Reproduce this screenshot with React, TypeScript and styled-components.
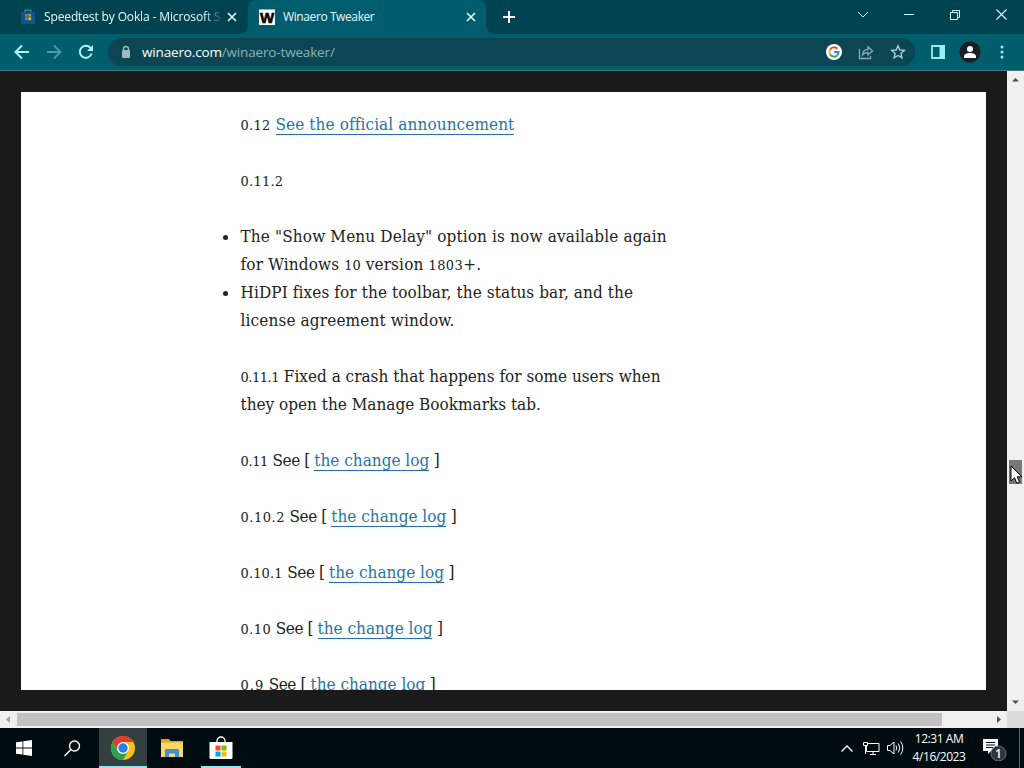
import React from "react";
import styled, { createGlobalStyle } from "styled-components";

const Global = createGlobalStyle`
  * { box-sizing: border-box; }
  body { margin: 0; overflow: hidden; background: #1a1a1a; }
`;

const UI = `"Open Sans", "Noto Sans", sans-serif`;

const Screen = styled.div`
  width: 1024px;
  height: 768px;
  display: flex;
  flex-direction: column;
  overflow: hidden;
  font-family: ${UI};
`;

const TabStrip = styled.header`
  height: 34px;
  flex: none;
  display: flex;
  background: #004350;
`;

const Tab = styled.div<{ $active?: boolean; $width: number; $pad: number }>`
  position: relative;
  width: ${(p) => p.$width}px;
  height: 34px;
  display: flex;
  align-items: center;
  padding: 0 ${(p) => (p.$active ? 10 : 11)}px 0 ${(p) => p.$pad}px;
  background: ${(p) => (p.$active ? "#005d6e" : "transparent")};
  border-radius: 8px 8px 0 0;
  color: #fff;

  &::before,
  &::after {
    content: "";
    display: ${(p) => (p.$active ? "block" : "none")};
    position: absolute;
    bottom: 0;
    width: 8px;
    height: 8px;
  }
  &::before {
    left: -8px;
    background: radial-gradient(circle at 0 0, transparent 7.5px, #005d6e 8px);
  }
  &::after {
    right: -8px;
    background: radial-gradient(circle at 100% 0, transparent 7.5px, #005d6e 8px);
  }
`;

const TabTitle = styled.span<{ $fade?: boolean; $spacing: number }>`
  flex: 1;
  margin-left: 8px;
  white-space: nowrap;
  font-size: 12px;
  line-height: 18px;
  letter-spacing: ${(p) => p.$spacing}px;
  color: #e8f8fa;
  mask-image: ${(p) => (p.$fade ? "linear-gradient(90deg, #000 87%, transparent 98%)" : "none")};
`;

const NewTab = styled.div`
  width: 46px;
  display: flex;
  align-items: center;
  justify-content: center;
`;

const WindowButtons = styled.div`
  margin-left: auto;
  display: flex;
  height: 29px;
`;

const WindowButton = styled.div`
  width: 46px;
  display: flex;
  align-items: center;
  justify-content: center;
`;

const Toolbar = styled.div`
  height: 37px;
  flex: none;
  display: flex;
  align-items: center;
  background: #005d6b;
  border-bottom: 1px solid #3c7c8a;
  padding-left: 6px;
`;

const ToolButton = styled.div<{ $width?: number }>`
  width: ${(p) => p.$width ?? 32}px;
  height: 28px;
  flex: none;
  display: flex;
  align-items: center;
  justify-content: center;
`;

const AddressBar = styled.div`
  width: 807px;
  height: 28px;
  flex: none;
  margin-left: 6px;
  padding: 0 1px 0 12px;
  border-radius: 14px;
  background: #0c4653;
  display: flex;
  align-items: center;
`;

const Url = styled.span`
  margin-left: 10px;
  flex: 1;
  font-size: 13.5px;
  letter-spacing: -0.16px;
  line-height: 20px;
  color: #86b3bb;
`;

const Host = styled.span`
  color: #fff;
`;

const Avatar = styled.svg`
  flex: none;
  overflow: visible;
`;

const Viewport = styled.main`
  height: 640px;
  flex: none;
  display: flex;
`;

const Page = styled.div`
  flex: 1;
  background: #1a1a1a;
  padding: 21px;
`;

const Sheet = styled.div`
  height: 598px;
  overflow: hidden;
  background: #fff;
  padding: 18px 0 0 219.5px;
`;

const Article = styled.article`
  font-family: "DejaVu Serif Condensed", "DejaVu Serif", serif;
  font-stretch: condensed;
  font-size: 17px;
  line-height: 28px;
  color: #222;
`;

const Paragraph = styled.p`
  margin: 0 0 28px;
`;

const List = styled.ul`
  margin: 0 0 28px;
  padding: 0;
  list-style: none;
`;

const Item = styled.li`
  position: relative;
  &::before {
    content: "";
    position: absolute;
    left: -17.500px;
    top: 13px;
    width: 5px;
    height: 5px;
    border-radius: 50%;
    background: #222;
  }
`;

const Line = styled.span<{ $spacing?: number }>`
  display: block;
  height: 28px;
  white-space: pre;
  letter-spacing: ${(p) => p.$spacing ?? 0}px;
`;

const Figures = styled.span<{ $spacing: number }>`
  font-family: "DejaVu Serif", serif;
  font-stretch: normal;
  font-size: 13px;
  letter-spacing: ${(p) => p.$spacing}px;
`;

const Tight = styled.span`
  letter-spacing: -0.4px;
`;

const Link = styled.a<{ $spacing?: number }>`
  color: #1f74ab;
  text-decoration: none;
  border-bottom: 1px solid #1f74ab;
  letter-spacing: ${(p) => p.$spacing ?? 0}px;
`;

const VerticalBar = styled.div`
  width: 17px;
  background: #f0f0f0;
  display: flex;
  flex-direction: column;
  align-items: center;
  padding: 6px 0 6px;
`;

const VerticalThumb = styled.div`
  width: 13px;
  height: 24px;
  margin: 378px 0 auto 0;
  background: #787878;
`;

const HorizontalBar = styled.div`
  height: 17px;
  flex: none;
  display: flex;
  align-items: center;
  background: #f0f0f0;
`;

const HorizontalThumb = styled.div`
  width: 925px;
  height: 13px;
  margin-left: 6px;
  background: #c1c1c1;
`;

const Corner = styled.div`
  width: 17px;
  height: 17px;
  background: #dcdcdc;
`;

const Taskbar = styled.footer`
  height: 40px;
  flex: none;
  display: flex;
  background: #010c10;
  color: #fff;
`;

const TaskButton = styled.div<{ $state?: "active" | "running"; $width?: number }>`
  width: ${(p) => p.$width ?? 49}px;
  height: 40px;
  display: flex;
  align-items: center;
  justify-content: center;
  background: ${(p) => (p.$state === "active" ? "#343f42" : "transparent")};
`;

const RunningButton = styled(TaskButton)`
  flex-direction: column;
  justify-content: flex-end;
`;

const Indicator = styled.div<{ $width: number }>`
  width: ${(p) => p.$width}px;
  height: 2px;
  margin-top: 6px;
  background: #8fe6f2;
`;

const Tray = styled.div`
  margin-left: auto;
  display: flex;
  align-items: center;
`;

const TrayIcon = styled.div<{ $width: number }>`
  width: ${(p) => p.$width}px;
  display: flex;
  justify-content: center;
`;

const Clock = styled.div`
  width: 64px;
  text-align: center;
  font-size: 12px;
  line-height: 18px;
  letter-spacing: -0.45px;
`;

const ShowDesktop = styled.div`
  width: 5px;
  height: 40px;
  border-left: 1px solid #57666a;
`;

const Pointer = styled.svg`
  position: absolute;
  left: 1010px;
  top: 465px;
`;

const Close = () => (
  <svg width="10" height="10" viewBox="0 0 10 10" stroke="#e8fbff" strokeWidth="1.6">
    <path d="M1 1l8 8M9 1L1 9" />
  </svg>
);

const StoreFavicon = () => (
  <svg width="16" height="16" viewBox="0 0 16 16">
    <path d="M5 3V1.200h6V3" fill="none" stroke="#1a8fd0" strokeWidth="1.300" />
    <path d="M1 3h14v10.500q0 1.500-1.500 1.500h-11Q1 15 1 13.500z" fill="#17518b" />
    <path d="M5 5h2.700v2.700H5z" fill="#f25022" />
    <path d="M8.400 5h2.700v2.700H8.400z" fill="#7fba00" />
    <path d="M5 8.400h2.700v2.700H5z" fill="#00a4ef" />
    <path d="M8.400 8.400h2.700v2.700H8.400z" fill="#ffb900" />
  </svg>
);

const WinaeroMark = styled.span`
  width: 16px;
  height: 16px;
  background: #fff;
  color: #000;
  font: bold 15px/15px "Liberation Sans", sans-serif;
  -webkit-text-stroke: 0.6px #000;
  display: flex;
  justify-content: center;
  border-top: 1px solid #e8a040;
`;

const ChromeLogo = () => (
  <svg width="24" height="24" viewBox="0 0 24 24">
    <circle cx="12" cy="12" r="12" fill="#fbc116" />
    <path d="M12 6h10.400A12 12 0 0 0 1.600 6L6.800 15z" fill="#e33b2e" />
    <path d="M1.600 6A12 12 0 0 0 12 24L17.200 15 12 12 6.800 15z" fill="#2da04b" />
    <circle cx="12" cy="12" r="6" fill="#fff" />
    <circle cx="12" cy="12" r="4.700" fill="#2f7de9" />
  </svg>
);

const GoogleLogo = () => (
  <svg width="16" height="16" viewBox="0 0 16 16">
    <circle cx="8" cy="8" r="8" fill="#fff" />
    <g fill="none" strokeWidth="2">
      <path d="M11.300 4.700A4.600 4.600 0 0 0 4 5.700" stroke="#ea4335" />
      <path d="M4 5.700a4.600 4.600 0 0 0 0 4.600" stroke="#fbbc05" />
      <path d="M4 10.300a4.600 4.600 0 0 0 7 1.200" stroke="#34a853" />
      <path d="M11 11.500A4.600 4.600 0 0 0 12.600 8H8" stroke="#4285f4" />
    </g>
  </svg>
);

const changeLogs = [
  { version: "0.11", spacing: -0.35 },
  { version: "0.10.2", spacing: 0.53 },
  { version: "0.10.1", spacing: 0.15 },
  { version: "0.10", spacing: 0.45 },
  { version: "0.9", spacing: 1 },
];

export default function App() {
  return (
    <Screen>
      <Global />
      <TabStrip>
        <Tab $width={248} $pad={20}>
          <StoreFavicon />
          <TabTitle $fade $spacing={-0.13}>Speedtest by Ookla - Microsoft S</TabTitle>
          <Close />
        </Tab>
        <Tab $active $width={238} $pad={11}>
          <WinaeroMark>W</WinaeroMark>
          <TabTitle $spacing={-0.4}>Winaero Tweaker</TabTitle>
          <Close />
        </Tab>
        <NewTab>
          <svg width="12" height="12" viewBox="0 0 12 12" stroke="#fff" strokeWidth="2">
            <path d="M6 0v12M0 6h12" />
          </svg>
        </NewTab>
        <WindowButtons>
          <WindowButton>
            <svg width="12" height="8" viewBox="0 0 12 8" fill="none" stroke="#c9f3f7">
              <path d="M1 1l5 5 5-5" />
            </svg>
          </WindowButton>
          <WindowButton>
            <svg width="10" height="2" viewBox="0 0 10 2"><path d="M0 0h10v1H0z" fill="#d5fafd" /></svg>
          </WindowButton>
          <WindowButton>
            <svg width="10" height="10" viewBox="0 0 10 10" fill="none" stroke="#d5fafd">
              <path d="M.5 2.500h7v7h-7zM2.500 2.500v-2h7v7h-2" />
            </svg>
          </WindowButton>
          <WindowButton>
            <svg width="11" height="11" viewBox="0 0 11 11" stroke="#d5fafd" strokeWidth="1.100">
              <path d="M.5.5l10 10M10.500.5l-10 10" />
            </svg>
          </WindowButton>
        </WindowButtons>
      </TabStrip>
      <Toolbar>
        <ToolButton>
          <svg width="16" height="16" viewBox="0 0 16 16" fill="none" stroke="#a8f4fa" strokeWidth="2">
            <path d="M15 8H2M8 1.500L1.500 8 8 14.500" />
          </svg>
        </ToolButton>
        <ToolButton>
          <svg width="16" height="16" viewBox="0 0 16 16" fill="none" stroke="#4e9ba5" strokeWidth="1.800">
            <path d="M1 8h13M8 1.500L14.500 8 8 14.500" />
          </svg>
        </ToolButton>
        <ToolButton>
          <svg width="16" height="16" viewBox="0 0 16 16" fill="none">
            <path d="M13.600 9.500A6 6 0 1 1 12.400 3.900L14 5.500" stroke="#a8f4fa" strokeWidth="2" />
            <path d="M15 1v6H9z" fill="#a8f4fa" />
          </svg>
        </ToolButton>
        <AddressBar>
          <svg width="12" height="14" viewBox="0 0 12 14">
            <path d="M3.500 6V4a2.500 2.500 0 0 1 5 0v2" fill="none" stroke="#a5b8be" strokeWidth="1.400" />
            <rect x="2" y="5" width="8" height="8" rx="1" fill="#a5b8be" />
          </svg>
          <Url><Host>winaero.com</Host>/winaero-tweaker/</Url>
          <ToolButton><GoogleLogo /></ToolButton>
          <ToolButton>
            <svg width="16" height="16" viewBox="0 0 16 16" fill="none" stroke="#86adb6" strokeWidth="1.300">
              <path d="M1.500 5v9.500h11V12M4.500 11c.3-4 2.500-5.500 5.500-5.500V2.800L14.500 7 10 11V8.500c-2.500 0-4 .7-5.500 2.500z" />
            </svg>
          </ToolButton>
          <ToolButton>
            <svg width="16" height="16" viewBox="0 0 16 16" fill="none" stroke="#a9d0d8" strokeWidth="1.400">
              <path d="M8 1.800l1.800 4.200 4.500.4-3.400 3 1 4.400L8 11.500l-3.900 2.300 1-4.400-3.400-3 4.500-.4z" />
            </svg>
          </ToolButton>
        </AddressBar>
        <ToolButton $width={46}>
          <svg width="14" height="14" viewBox="0 0 14 14">
            <path d="M1 1h12v12H1z" fill="none" stroke="#97edf4" strokeWidth="1.800" />
            <path d="M8.500 0H14v14H8.500z" fill="#97edf4" />
          </svg>
        </ToolButton>
        <ToolButton $width={18}>
          <Avatar width="22" height="22" viewBox="0 0 22 22">
            <circle cx="11" cy="11" r="10.500" fill="#1a1f24" />
            <circle cx="11" cy="8" r="3" fill="#fff" />
            <path d="M5 17v-1.500C5 13 8 12 11 12s6 1 6 3.500V17z" fill="#fff" />
          </Avatar>
        </ToolButton>
        <ToolButton $width={46}>
          <svg width="4" height="14" viewBox="0 0 4 14" fill="#97edf4">
            <circle cx="2" cy="2" r="1.500" /><circle cx="2" cy="7" r="1.500" /><circle cx="2" cy="12" r="1.500" />
          </svg>
        </ToolButton>
      </Toolbar>
      <Viewport>
        <Page>
          <Sheet>
            <Article>
              <Paragraph><Line><Figures $spacing={0.3}>0.12</Figures> <Link $spacing={0.1}>See the official announcement</Link></Line></Paragraph>
              <Paragraph><Line><Figures $spacing={0.25}>0.11.2</Figures></Line></Paragraph>
              <List>
                <Item>
                  <Line $spacing={0.14}>The "Show Menu Delay" option is now available again</Line>
                  <Line $spacing={0.15}>for Windows <Figures $spacing={-0.1}>10</Figures> version <Figures $spacing={0.4}>1803</Figures>+.</Line>
                </Item>
                <Item>
                  <Line $spacing={0.1}>HiDPI fixes for the toolbar, the status bar, and the</Line>
                  <Line $spacing={0.14}>license agreement window.</Line>
                </Item>
              </List>
              <Paragraph>
                <Line><Figures $spacing={-0.48}>0.11.1</Figures> Fixed a crash that happens for some users when</Line>
                <Line>they open the Manage Bookmarks tab.</Line>
              </Paragraph>
              {changeLogs.map((log) => (
                <Paragraph key={log.version}>
                  <Line><Figures $spacing={log.spacing}>{log.version}</Figures><Tight> See [ </Tight><Link>the change log</Link><Tight> ]</Tight></Line>
                </Paragraph>
              ))}
            </Article>
          </Sheet>
        </Page>
        <VerticalBar>
          <svg width="7" height="5" viewBox="0 0 7 5" fill="#505050"><path d="M0 4.500L3.500 1 7 4.500z" /></svg>
          <VerticalThumb />
          <svg width="7" height="5" viewBox="0 0 7 5" fill="#505050"><path d="M0 .5L3.500 4 7 .5z" /></svg>
        </VerticalBar>
      </Viewport>
      <HorizontalBar>
        <svg width="11" height="7" viewBox="0 0 11 7" fill="#a3a3a3"><path d="M10 0L6 3.500 10 7z" /></svg>
        <HorizontalThumb />
        <svg width="65" height="7" viewBox="0 0 65 7" fill="#505050"><path d="M55 0l4 3.500L55 7z" /></svg>
        <Corner />
      </HorizontalBar>
      <Taskbar>
        <TaskButton $width={48}>
          <svg width="16" height="16" viewBox="0 0 16 16" fill="#fff">
            <path d="M0 2.300L6.500 1.400V7.600H0zM7.300 1.300L16 0v7.600H7.300zM0 8.400h6.500v6.200L0 13.700zM7.300 8.400H16V16l-8.700-1.300z" />
          </svg>
        </TaskButton>
        <TaskButton $width={51}>
          <svg width="20" height="17" viewBox="0 0 20 17" fill="none" stroke="#fff" strokeWidth="1.400">
            <circle cx="10.500" cy="6" r="5" /><path d="M7 9.500L.5 16" />
          </svg>
        </TaskButton>
        <RunningButton $state="active" $width={48}><ChromeLogo /><Indicator $width={48} /></RunningButton>
        <TaskButton>
          <svg width="22" height="18" viewBox="0 0 22 18">
            <path d="M0 0h8l1.500 2H22v16H0z" fill="#e8a520" />
            <path d="M0 3.500h22V18H0z" fill="#fcd76a" />
            <path d="M4 18v-6.500q0-1.500 1.500-1.500h11q1.500 0 1.500 1.500V18h-4v-3.500H8V18z" fill="#3f92cc" />
          </svg>
        </TaskButton>
        <RunningButton>
          <svg width="24" height="24" viewBox="0 0 24 24">
            <path d="M8 7V5a4 4 0 0 1 8 0v2" fill="none" stroke="#fff" strokeWidth="1.300" />
            <path d="M.5 6h23v15.500q0 1.500-1.500 1.500H2Q.5 23 .5 21.500z" fill="#fff" />
            <path d="M6.500 9.500h5v5h-5z" fill="#f25022" /><path d="M12.500 9.500h5v5h-5z" fill="#7fba00" />
            <path d="M6.500 15.500h5v5h-5z" fill="#00a4ef" /><path d="M12.500 15.500h5v5h-5z" fill="#ffb900" />
          </svg>
          <Indicator $width={40} />
        </RunningButton>
        <Tray>
          <TrayIcon $width={24}>
            <svg width="12" height="7" viewBox="0 0 12 7" fill="none" stroke="#fff" strokeWidth="1.300"><path d="M.5 6.500L6 1l5.500 5.500" /></svg>
          </TrayIcon>
          <TrayIcon $width={24}>
            <svg width="17" height="15" viewBox="0 0 17 15" fill="none" stroke="#fff">
              <path d="M5 2.500h11v8H3.500V5M7 13.500h6M10 10.500v3M.5 1.500h4v3h-4zM2.500 4.500v8.500" />
            </svg>
          </TrayIcon>
          <TrayIcon $width={24}>
            <svg width="17" height="16" viewBox="0 0 17 16" fill="none" stroke="#fff">
              <path d="M.5 5.500h2.500l4-3.500v12l-4-3.500H.5zM9 5.500q1.500 2.500 0 5M11.300 3.500q3 4.500 0 9M13.600 1.500q4.500 6.500 0 13" />
            </svg>
          </TrayIcon>
          <Clock>12:31 AM<br />4/16/2023</Clock>
          <TrayIcon $width={48}>
            <svg width="26" height="26" viewBox="0 0 26 26">
              <path d="M1 4h15v12H9l-3 3v-3H1z" fill="#fff" />
              <path d="M4 7h9v1H4zM4 9.500h9v1H4zM4 12h7v1H4z" fill="#010e12" />
              <circle cx="16.500" cy="18.500" r="7.500" fill="#2e3539" stroke="#68757a" />
              <text x="16.500" y="23" fontSize="12" fontWeight="600" textAnchor="middle" fill="#fff" fontFamily="Open Sans">1</text>
            </svg>
          </TrayIcon>
          <ShowDesktop />
        </Tray>
      </Taskbar>
      <Pointer width="14" height="20" viewBox="0 0 14 20">
        <path d="M1 1v15l3.500-3.300 2.300 5.600 2.700-1.100-2.300-5.400H12z" fill="#fff" stroke="#000" />
      </Pointer>
    </Screen>
  );
}
